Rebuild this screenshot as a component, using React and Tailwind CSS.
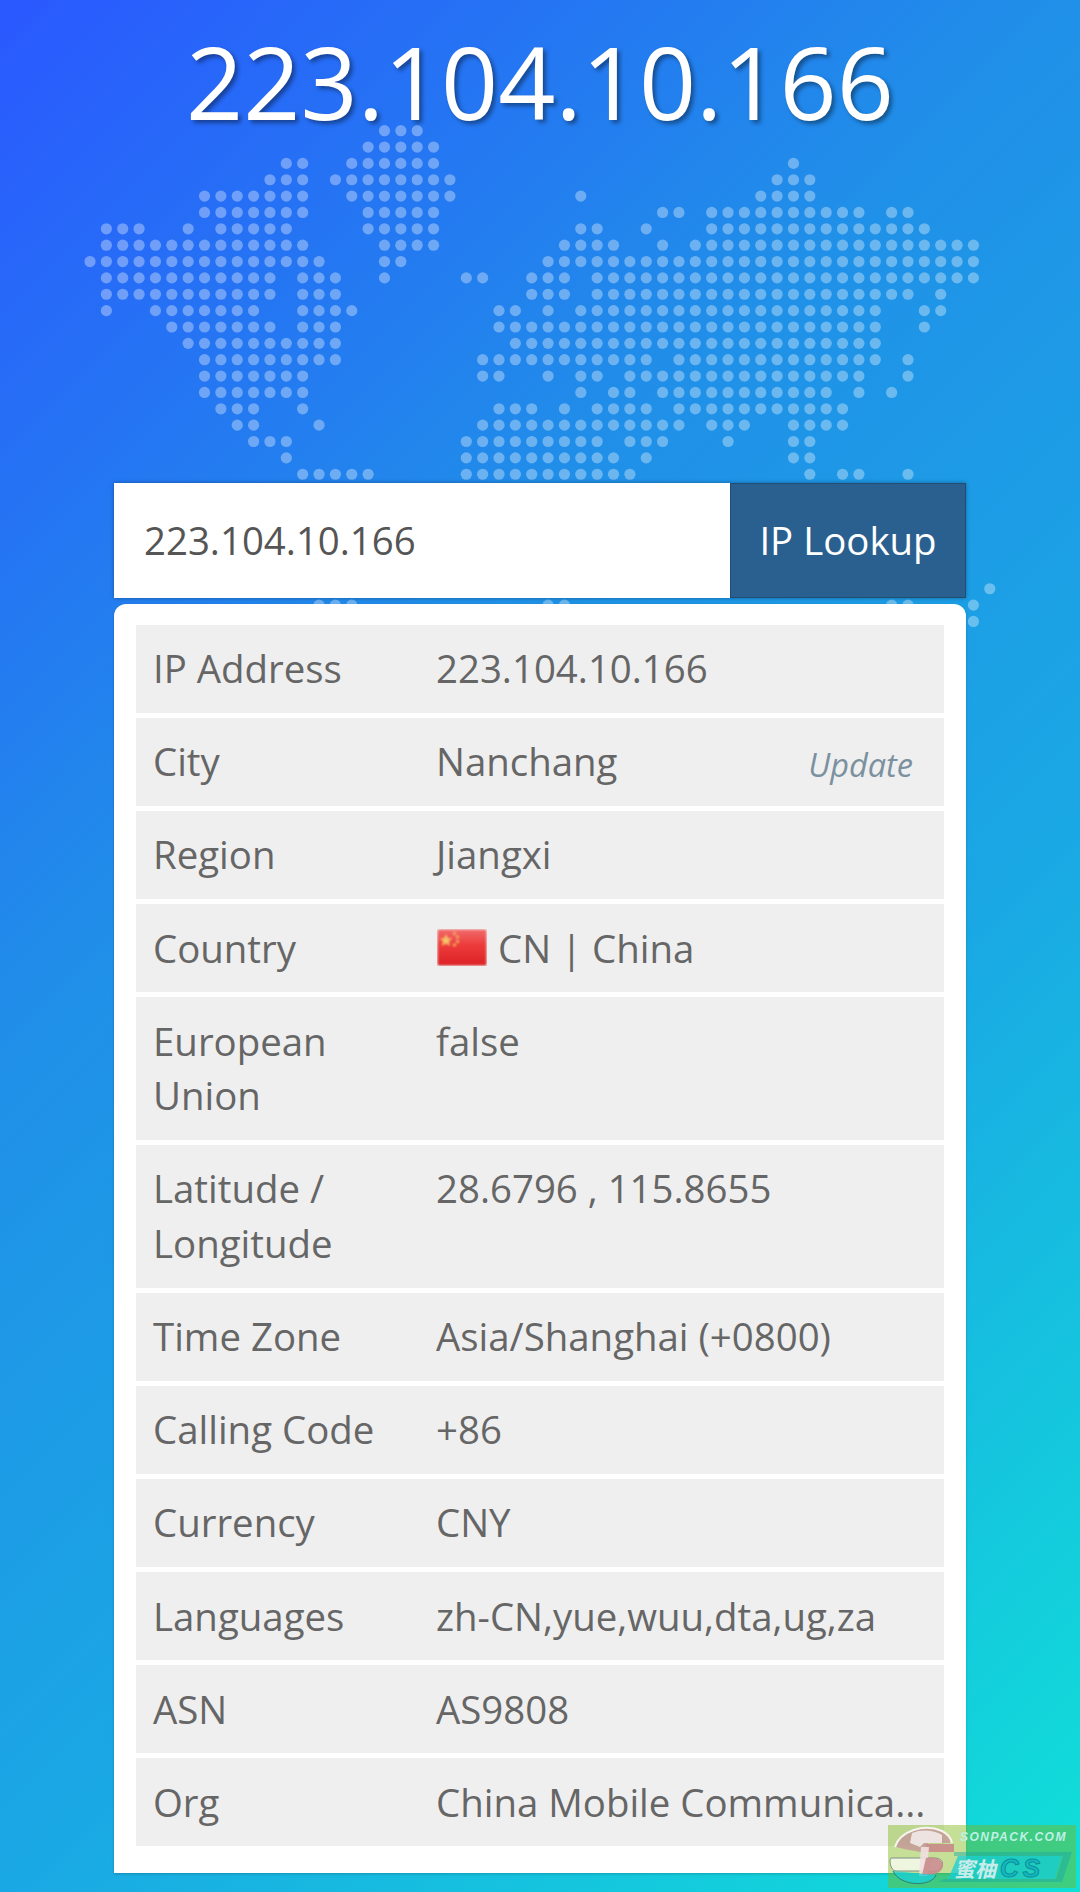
const DOTS = {
  0: [[18, 20]],
  1: [[17, 21]],
  2: [[12, 13], [16, 21], [43, 43]],
  3: [[11, 13], [15, 22], [42, 44]],
  4: [[7, 13], [16, 22], [30, 30], [41, 44]],
  5: [[7, 13], [17, 21], [35, 36], [38, 47], [49, 50]],
  6: [[1, 3], [6, 6], [8, 12], [17, 21], [30, 31], [34, 34], [38, 51]],
  7: [[1, 13], [18, 21], [29, 32], [35, 35], [37, 54]],
  8: [[0, 14], [18, 19], [28, 54]],
  9: [[1, 11], [13, 15], [18, 18], [23, 24], [27, 29], [31, 54]],
  10: [[1, 11], [13, 15], [27, 29], [31, 50], [52, 52]],
  11: [[1, 1], [4, 10], [13, 16], [25, 26], [28, 28], [30, 48], [51, 52]],
  12: [[5, 11], [13, 15], [25, 48], [51, 51]],
  13: [[6, 15], [26, 48]],
  14: [[7, 15], [24, 34], [36, 48], [50, 50]],
  15: [[7, 13], [24, 25], [28, 28], [30, 31], [33, 47], [50, 50]],
  16: [[7, 13], [30, 30], [32, 33], [35, 45], [47, 47], [49, 49]],
  17: [[8, 10], [13, 13], [25, 27], [29, 29], [31, 34], [36, 46]],
  18: [[9, 10], [14, 14], [24, 36], [38, 40], [43, 46]],
  19: [[10, 12], [23, 31], [33, 35], [39, 39], [43, 44]],
  20: [[12, 12], [23, 32], [34, 34], [43, 44]],
  21: [[13, 17], [23, 33], [44, 44], [46, 47], [50, 50]],
  28: [[55, 55]],
  29: [[14, 16], [28, 29], [49, 50], [54, 54]],
  30: [[54, 54]],
};

function WorldDots() {
  const circles = [];
  Object.entries(DOTS).forEach(([row, spans]) => {
    spans.forEach(([a, b]) => {
      for (let c = a; c <= b; c++) {
        circles.push(
          <circle key={row + '-' + c} cx={90 + 16.36 * c} cy={130.67 + 16.36 * Number(row)} r="5.6" />
        );
      }
    });
  });
  return (
    <svg className="absolute left-0 top-0" width="1080" height="700" fill="#ffffff" fillOpacity="0.34" aria-hidden="true">
      {circles}
    </svg>
  );
}

function Flag() {
  return (
    <svg width="50" height="37" viewBox="0 0 50 37" className="ml-[1px] shrink-0" aria-hidden="true">
      <defs>
        <linearGradient id="flagShade" x1="0" y1="0" x2="0" y2="1">
          <stop offset="0" stopColor="#f26a6a" />
          <stop offset="0.45" stopColor="#ec3a3a" />
          <stop offset="1" stopColor="#dc2226" />
        </linearGradient>
        <filter id="flagSoft" x="-10%" y="-10%" width="120%" height="120%">
          <feGaussianBlur stdDeviation="0.9" />
        </filter>
      </defs>
      <g filter="url(#flagSoft)">
        <rect x="0.5" y="0.5" width="49" height="36" rx="1.5" fill="url(#flagShade)" />
        <polygon points="9,5 10.6,9.5 15.2,9.5 11.5,12.3 12.9,16.8 9,14 5.1,16.8 6.5,12.3 2.8,9.5 7.4,9.5" fill="#f7c66a" />
        <circle cx="17.5" cy="4.5" r="1.2" fill="#f7c66a" />
        <circle cx="20.5" cy="8" r="1.2" fill="#f7c66a" />
        <circle cx="20.5" cy="12.5" r="1.2" fill="#f7c66a" />
        <circle cx="17.5" cy="16" r="1.2" fill="#f7c66a" />
      </g>
    </svg>
  );
}

function Row({ label, children }) {
  return (
    <div className="flex bg-[#efefef] px-[17px] pb-[16.8px] pt-[16.4px]">
      <div className="w-[283px] shrink-0">{label}</div>
      <div className="min-w-0 flex-1">{children}</div>
    </div>
  );
}

function Watermark() {
  return (
    <div className="absolute bottom-[4px] right-[4px] h-[63px] w-[188px] overflow-hidden bg-[rgba(123,184,15,0.44)]">
      <svg className="absolute left-0 top-0" width="188" height="63" viewBox="0 0 188 63" fill="none" aria-hidden="true">
        <path d="M8 22 C12 6 36 -1 54 6 C62 10 64 15 62 18 L40 18 L38 28 L16 24 Z" fill="#c49a98" fillOpacity="0.85" />
        <path d="M24 8 C34 4 46 5 54 10 L54 18 L36 18 L32 22 L22 18 Z" fill="#f4f0ee" fillOpacity="0.85" />
        <path d="M7 22 C12 6 36 -2 54 6 C60 9 63 13 64 18" stroke="#f6f4ee" strokeWidth="2" />
        <rect x="38" y="19" width="28" height="8" fill="#c98b8b" fillOpacity="0.9" />
        <path d="M3 33 H46 C52 33 56 36 54 41 C52 46 46 47 40 46 H8 C2 46 1 34 3 33 Z" fill="#ffffff" fillOpacity="0.7" stroke="#7d8f86" strokeWidth="1" />
        <path d="M33 22 H41 L40 33 H45 L39 51 H31 Z" fill="#efe0e0" fillOpacity="0.9" />
        <path d="M38 33 C50 31 58 37 54 44 C50 50 42 50 34 50 Z" fill="#c98b8b" fillOpacity="0.9" />
        <path d="M5 46 C12 62 44 62 48 50" fill="#18d0d8" fillOpacity="0.75" stroke="#2f7f72" strokeWidth="1" />
        <path d="M66 27 H184 L174 57 H50 L56 54 H168 L175 31 H66 Z" fill="#17a7a8" fillOpacity="0.45" />
        <path d="M70 31 H174 L167 54 H60 Z" fill="#16cdd6" fillOpacity="0.75" />
      </svg>
      <div className="absolute left-[72px] top-[5px] whitespace-nowrap font-['Liberation_Sans',sans-serif] text-[12px] font-bold italic leading-[14px] tracking-[1.5px] text-[#bff0e6]">
        SONPACK.COM
      </div>
      <div className="absolute left-[66px] top-[29px] whitespace-nowrap font-['Noto_Sans_CJK_SC','Liberation_Sans',sans-serif] text-[21px] font-bold italic leading-[28px] text-[#c8ecea]">
        蜜柚
      </div>
      <div className="absolute left-[112px] top-[29px] whitespace-nowrap font-['Liberation_Sans',sans-serif] text-[26px] font-bold italic leading-[28px] tracking-[4px] text-[#12b8c2] [-webkit-text-stroke:1px_#0e8f94]">
        CS
      </div>
    </div>
  );
}

export default function App() {
  return (
    <div className="relative h-[1892px] w-[1080px] overflow-hidden bg-[linear-gradient(135deg,#2a58ff_0%,#2090e8_36%,#1aa8e4_64%,#10e0d8_100%)] font-['Open_Sans',sans-serif]">
      <WorldDots />
      <div className="relative flex flex-col px-[114px]">
        <h1 className="mb-[333px] mt-[12px] whitespace-nowrap text-center text-[100px] font-normal leading-[138px] text-white [text-shadow:3px_3px_4px_rgba(0,0,0,0.4)]">
          223.104.10.166
        </h1>
        <div className="flex h-[115px] shadow-[0_0_4px_rgba(0,0,0,0.35)]">
          <div className="flex flex-1 items-center bg-white pl-[30px] text-[38.4px] text-[#555555]">223.104.10.166</div>
          <div className="flex w-[236px] items-center justify-center border border-[#204d74] bg-[#2a6090] text-[38.4px] text-white">
            IP Lookup
          </div>
        </div>
        <div className="mt-[6px] flex flex-col gap-[5px] rounded-t-[12px] bg-white px-[22px] pb-[27px] pt-[21px] text-[38.4px] leading-[54.86px] text-[#666666] shadow-[0_1px_3px_rgba(0,0,0,0.2)]">
          <Row label="IP Address">223.104.10.166</Row>
          <Row label="City">
            <div className="flex h-[54.86px] items-center justify-between pr-[14px]">
              <span>Nanchang</span>
              <span className="pt-[6px] text-[32.5px] italic leading-none text-[#7b919f]">Update</span>
            </div>
          </Row>
          <Row label="Region">Jiangxi</Row>
          <Row label="Country">
            <div className="flex h-[54.86px] items-center gap-[11px]">
              <Flag />
              <span>CN | China</span>
            </div>
          </Row>
          <Row label="European Union">false</Row>
          <Row label="Latitude / Longitude">28.6796 , 115.8655</Row>
          <Row label="Time Zone">Asia/Shanghai (+0800)</Row>
          <Row label="Calling Code">+86</Row>
          <Row label="Currency">CNY</Row>
          <Row label="Languages">zh-CN,yue,wuu,dta,ug,za</Row>
          <Row label="ASN">AS9808</Row>
          <Row label="Org">
            <div className="whitespace-nowrap">China Mobile Communica...</div>
          </Row>
        </div>
      </div>
      <Watermark />
    </div>
  );
}
